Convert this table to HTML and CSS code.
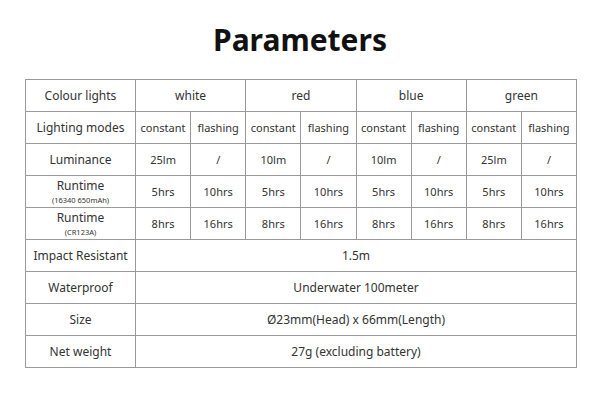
FILE: index.html
```html
<!DOCTYPE html>
<html>
<head>
<meta charset="utf-8">
<link rel="stylesheet" href="styles.css">
</head>
<body>
<h1 class="title">Parameters</h1>
<div class="table">
  <div class="cell head">Colour lights</div>
  <div class="cell span2">white</div>
  <div class="cell span2">red</div>
  <div class="cell span2">blue</div>
  <div class="cell span2">green</div>

  <div class="cell head">Lighting modes</div>
  <div class="cell">constant</div><div class="cell">flashing</div>
  <div class="cell">constant</div><div class="cell">flashing</div>
  <div class="cell">constant</div><div class="cell">flashing</div>
  <div class="cell">constant</div><div class="cell">flashing</div>

  <div class="cell head">Luminance</div>
  <div class="cell">25lm</div><div class="cell">/</div>
  <div class="cell">10lm</div><div class="cell">/</div>
  <div class="cell">10lm</div><div class="cell">/</div>
  <div class="cell">25lm</div><div class="cell">/</div>

  <div class="cell head two"><span class="main">Runtime</span><span class="sub">(16340 650mAh)</span></div>
  <div class="cell">5hrs</div><div class="cell">10hrs</div>
  <div class="cell">5hrs</div><div class="cell">10hrs</div>
  <div class="cell">5hrs</div><div class="cell">10hrs</div>
  <div class="cell">5hrs</div><div class="cell">10hrs</div>

  <div class="cell head two"><span class="main">Runtime</span><span class="sub">(CR123A)</span></div>
  <div class="cell">8hrs</div><div class="cell">16hrs</div>
  <div class="cell">8hrs</div><div class="cell">16hrs</div>
  <div class="cell">8hrs</div><div class="cell">16hrs</div>
  <div class="cell">8hrs</div><div class="cell">16hrs</div>

  <div class="cell head">Impact Resistant</div>
  <div class="cell full">1.5m</div>

  <div class="cell head">Waterproof</div>
  <div class="cell full">Underwater 100meter</div>

  <div class="cell head">Size</div>
  <div class="cell full">Ø23mm(Head) x 66mm(Length)</div>

  <div class="cell head">Net weight</div>
  <div class="cell full">27g (excluding battery)</div>
</div>
</body>
</html>
```

FILE: styles.css
```css
html, body {
  margin: 0;
  padding: 0;
  background: #ffffff;
}
body {
  font-family: "Noto Sans", "Open Sans", sans-serif;
  color: #333333;
}
.title {
  margin: 20px 0 0 0;
  height: 40px;
  font-size: 30px;
  line-height: 40px;
  font-weight: 700;
  color: #111111;
  text-align: center;
}
.table {
  margin: 19px 0 0 25px;
  width: 552px;
  box-sizing: border-box;
  display: grid;
  grid-template-columns: 110px repeat(8, 1fr);
  grid-auto-rows: 32px;
  border-top: 1px solid #9a9a9a;
  border-left: 1px solid #9a9a9a;
}
.cell {
  border-right: 1px solid #9a9a9a;
  border-bottom: 1px solid #9a9a9a;
  display: flex;
  align-items: center;
  justify-content: center;
  font-size: 11px;
  white-space: nowrap;
}
.head {
  font-size: 12px;
}
.span2 {
  grid-column: span 2;
  font-size: 12px;
}
.full {
  grid-column: span 8;
  font-size: 12px;
}
.two {
  flex-direction: column;
}
.main {
  font-size: 12px;
  line-height: 16.4px;
}
.sub {
  font-size: 7.5px;
  line-height: 10.3px;
}
```
